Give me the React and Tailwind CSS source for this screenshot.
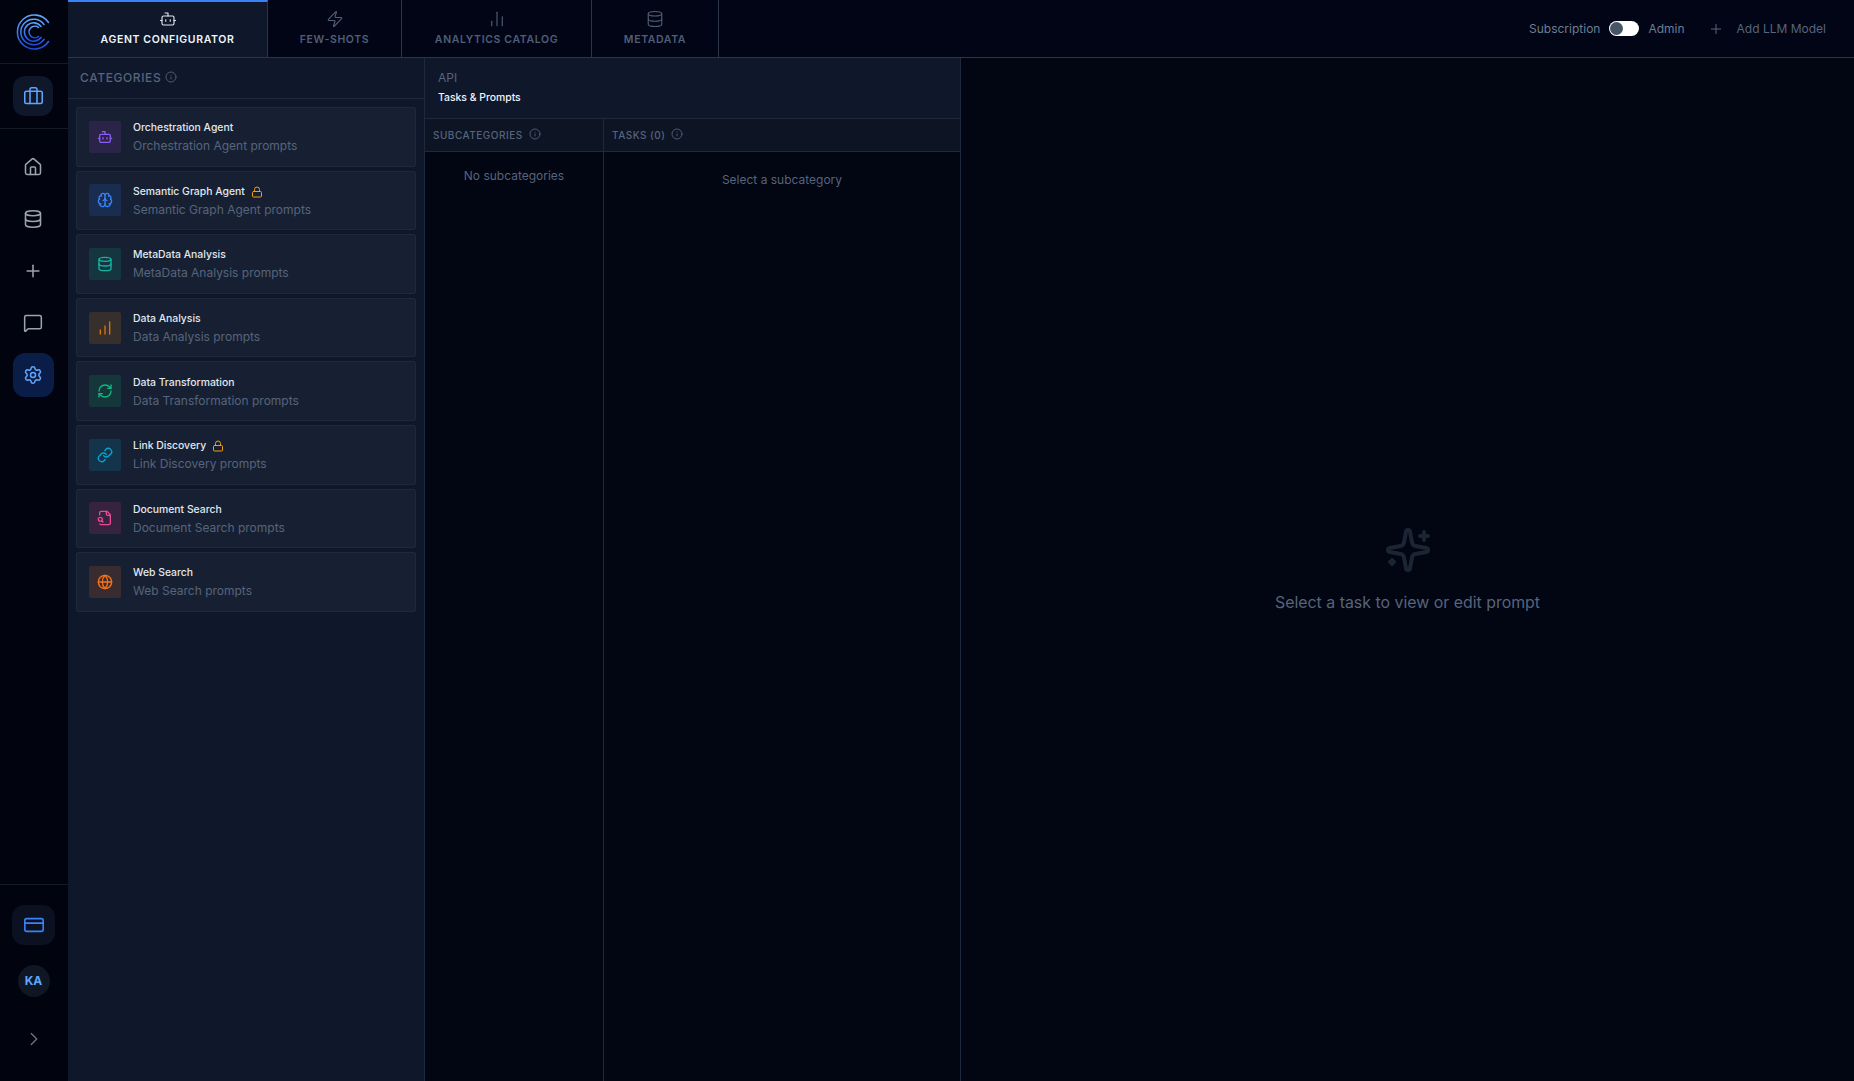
import React from "react";
import { Bot, Zap, ChartNoAxesColumn, Database, Briefcase, Home, Plus, MessageSquare, Settings, CreditCard, ChevronRight, Info, Lock, Brain, RefreshCw, Link as LinkIcon, Globe, ChartNoAxesColumnIncreasing } from "lucide-react";

function Logo() {
  return (
    <svg width="36" height="36" viewBox="0 0 36 36" fill="none" strokeLinecap="round">
      <defs>
        <linearGradient id="lg" x1="0" y1="0" x2="0" y2="1">
          <stop offset="0" stopColor="#60a5fa" />
          <stop offset="1" stopColor="#1d4ed8" />
        </linearGradient>
      </defs>
      <path d="M33.5 8.5A17 17 0 1 0 33.5 27.5" stroke="url(#lg)" strokeWidth="1.6" />
      <path d="M29 10.5A12.8 12.8 0 1 0 29 25.5" stroke="url(#lg)" strokeWidth="1.6" />
      <path d="M26 12.5A9.2 9.2 0 1 0 26 23.5" stroke="url(#lg)" strokeWidth="1.6" />
      <path d="M23.5 13.5A5.8 5.8 0 1 0 23.5 22.5" stroke="url(#lg)" strokeWidth="1.6" />
    </svg>
  );
}

function DocSearch({ className }) {
  return (
    <svg width="16" height="16" viewBox="0 0 24 24" fill="none" stroke="currentColor" strokeWidth="2" strokeLinecap="round" strokeLinejoin="round" className={className}>
      <path d="M14 2v4a2 2 0 0 0 2 2h4" />
      <path d="M4.268 21a2 2 0 0 0 1.727 1H18a2 2 0 0 0 2-2V7l-5-5H6a2 2 0 0 0-2 2v3" />
      <path d="m9 18-1.5-1.5" />
      <circle cx="5" cy="14" r="3" />
    </svg>
  );
}

function Star({ className }) {
  return (
    <svg width="48" height="48" viewBox="0 0 24 24" fill="none" stroke="currentColor" strokeWidth="2" strokeLinecap="round" strokeLinejoin="round" className={className}>
      <path d="M11.017 2.814a1 1 0 0 1 1.966 0l1.051 5.558a2 2 0 0 0 1.594 1.594l5.558 1.051a1 1 0 0 1 0 1.966l-5.558 1.051a2 2 0 0 0-1.594 1.594l-1.051 5.558a1 1 0 0 1-1.966 0l-1.051-5.558a2 2 0 0 0-1.594-1.594l-5.558-1.051a1 1 0 0 1 0-1.966l5.558-1.051a2 2 0 0 0 1.594-1.594z" />
      <path d="M20 3v4" />
      <path d="M22 5h-4" />
      <path d="M4 17v2" />
      <path d="M5 18H3" />
    </svg>
  );
}

const tabs = [
  { label: "AGENT CONFIGURATOR", Icon: Bot, w: "w-[200px]", active: true },
  { label: "FEW-SHOTS", Icon: Zap, w: "w-[134px]" },
  { label: "ANALYTICS CATALOG", Icon: ChartNoAxesColumn, w: "w-[190px]" },
  { label: "METADATA", Icon: Database, w: "w-[127px]" },
];

const cats = [
  { t: "Orchestration Agent", Icon: Bot, box: "bg-[#2a2548]", c: "text-[#8b5cf6]" },
  { t: "Semantic Graph Agent", Icon: Brain, box: "bg-[#182d4f]", c: "text-[#3b82f6]", lock: true },
  { t: "MetaData Analysis", Icon: Database, box: "bg-[#15363f]", c: "text-[#14b8a6]" },
  { t: "Data Analysis", Icon: ChartNoAxesColumnIncreasing, box: "bg-[#362f2c]", c: "text-[#d97706]" },
  { t: "Data Transformation", Icon: RefreshCw, box: "bg-[#15363a]", c: "text-[#10b981]" },
  { t: "Link Discovery", Icon: LinkIcon, box: "bg-[#14344b]", c: "text-[#06a5d4]", lock: true },
  { t: "Document Search", Icon: DocSearch, box: "bg-[#35233f]", c: "text-[#ec4899]" },
  { t: "Web Search", Icon: Globe, box: "bg-[#382c30]", c: "text-[#f97316]" },
];

export default function App() {
  return (
    <div className="flex h-screen w-full overflow-hidden bg-[#020512] font-['Inter',sans-serif]">
      <aside className="flex h-full w-[68px] shrink-0 flex-col items-stretch bg-[#01030f]">
        <div className="flex h-[64px] items-center justify-center border-b border-[#141a28] pr-[2px]">
          <Logo />
        </div>
        <div className="flex h-[65px] items-center justify-center border-b border-[#141a28] pr-[2px]">
          <div className="flex h-[40px] w-[40px] items-center justify-center rounded-xl bg-[#0f172a]">
            <Briefcase size={21} strokeWidth={1.75} className="text-[#60a5fa]" />
          </div>
        </div>
        <nav className="flex flex-col items-center gap-2 pt-[16px] pr-[2px]">
          {[Home, Database, Plus, MessageSquare].map((I, i) => (
            <div key={i} className="flex h-[44px] w-[41px] items-center justify-center">
              <I size={20} strokeWidth={1.85} className="text-[#9ca3af]" />
            </div>
          ))}
          <div className="flex h-[44px] w-[41px] items-center justify-center rounded-xl bg-[#0a1d47]">
            <Settings size={20} strokeWidth={1.85} className="text-[#60a5fa]" />
          </div>
        </nav>
        <div className="mt-auto flex h-[197px] flex-col items-center border-t border-[#141a28] pt-[20px] pr-[1px]">
          <div className="flex h-[40px] w-[43px] items-center justify-center rounded-xl bg-[#0b1120]">
            <CreditCard size={22} strokeWidth={1.75} className="text-[#3b82f6]" />
          </div>
          <div className="mt-[20px] flex h-[32px] w-[32px] items-center justify-center rounded-full bg-[#0f1624] text-xs font-bold text-[#60a5fa]">KA</div>
          <div className="mt-[31px]">
            <ChevronRight size={22} strokeWidth={1.5} className="text-[#6b7280]" />
          </div>
        </div>
      </aside>

      <div className="flex min-w-0 flex-1 flex-col">
        <header className="flex h-[58px] shrink-0 items-stretch justify-between border-b border-[#2b3547] bg-[#020515]">
          <div className="flex">
            {tabs.map(({ label, Icon, w, active }) => (
              <div key={label} className={`flex ${w} flex-col items-center border-r border-[#2b3547] ${active ? "border-t-2 border-t-[#3b82f6] bg-[#0f172a] pt-[8px]" : "pt-[10px]"}`}>
                <Icon size={18} strokeWidth={1.5} className={active ? "text-[#e2e8f0]" : "text-[#4f5f78]"} />
                <span className={`mt-[5px] text-[10.5px] leading-[14px] font-semibold tracking-[0.06em] ${active ? "text-[#f1f5f9]" : "text-[#4f5f78]"}`}>{label}</span>
              </div>
            ))}
          </div>
          <div className="flex items-center pr-[28px] text-[12px] text-[#6b7d96]">
            <span>Subscription</span>
            <span className="ml-[9px] flex h-[15px] w-[30px] items-center rounded-full bg-white pl-[1px]">
              <span className="h-[13px] w-[13px] rounded-full bg-[#475569]" />
            </span>
            <span className="ml-[9px]">Admin</span>
            <Plus size={16} strokeWidth={1.5} className="ml-[23px] text-[#56647c]" />
            <span className="ml-[13px] text-[#56647c]">Add LLM Model</span>
          </div>
        </header>

        <div className="flex min-h-0 flex-1">
          <section className="flex w-[357px] shrink-0 flex-col border-r border-[#1e293b] bg-[#0f172a]">
            <div className="flex h-[41px] shrink-0 items-center gap-[4px] border-b border-[#1e293b] pl-[12px]">
              <span className="text-[12px] font-medium tracking-[0.05em] text-[#56647c]">CATEGORIES</span>
              <Info size={12} strokeWidth={1.75} className="mb-[3px] text-[#56647c]" />
            </div>
            <div className="flex flex-col gap-[4px] px-[8px] pt-[8px]">
              {cats.map(({ t, Icon, box, c, lock }) => (
                <div key={t} className="flex h-[59.6px] items-center rounded-[2px] border border-[#1e293b] bg-[#162032] pl-[12px]">
                  <div className={`flex h-[32px] w-[32px] shrink-0 items-center justify-center rounded-[2px] ${box}`}>
                    <Icon size={16} strokeWidth={2} className={c} />
                  </div>
                  <div className="ml-[12px] flex flex-col pt-[1px]">
                    <div className="flex items-center">
                      <span className="text-[10.4px] leading-[18px] font-medium text-[#e2e8f0]">{t}</span>
                      {lock && <Lock size={12} strokeWidth={2} className="ml-[6px] text-[#f59e0b]" />}
                    </div>
                    <span className="text-[12px] leading-[18px] text-[#56647c]">{t} prompts</span>
                  </div>
                </div>
              ))}
            </div>
          </section>

          <section className="flex w-[536px] shrink-0 flex-col border-r border-[#1e293b]">
            <div className="flex h-[61px] shrink-0 flex-col border-b border-[#1e293b] bg-[#0f172a] pl-[13px] pt-[11px]">
              <span className="text-[12px] leading-[18px] text-[#56647c]">API</span>
              <span className="mt-[3px] text-[10.4px] leading-[16px] font-medium text-[#f1f5f9]">Tasks &amp; Prompts</span>
            </div>
            <div className="flex min-h-0 flex-1">
              <div className="flex w-[179px] shrink-0 flex-col border-r border-[#1e293b]">
                <div className="flex h-[33px] shrink-0 items-center gap-[6px] border-b border-[#1e293b] bg-[#0d1424] pl-[8px]">
                  <span className="text-[10px] font-medium tracking-[0.05em] text-[#56647c]">SUBCATEGORIES</span>
                  <Info size={12} strokeWidth={1.75} className="mb-[3px] text-[#56647c]" />
                </div>
                <div className="pt-[15px] text-center text-[12px] leading-[18px] text-[#56647c]">No subcategories</div>
              </div>
              <div className="flex flex-1 flex-col">
                <div className="flex h-[33px] shrink-0 items-center gap-[6px] border-b border-[#1e293b] bg-[#0d1424] pl-[8px]">
                  <span className="text-[10px] font-medium tracking-[0.05em] text-[#56647c]">TASKS (0)</span>
                  <Info size={12} strokeWidth={1.75} className="mb-[3px] text-[#56647c]" />
                </div>
                <div className="pt-[19px] text-center text-[12px] leading-[18px] text-[#56647c]">Select a subcategory</div>
              </div>
            </div>
          </section>

          <main className="flex flex-1 flex-col items-center bg-[#020512] pt-[468px]">
            <Star className="text-[#1c2534]" />
            <p className="mt-[17px] text-[15.9px] leading-[24px] text-[#56647c]">Select a task to view or edit prompt</p>
          </main>
        </div>
      </div>
    </div>
  );
}
